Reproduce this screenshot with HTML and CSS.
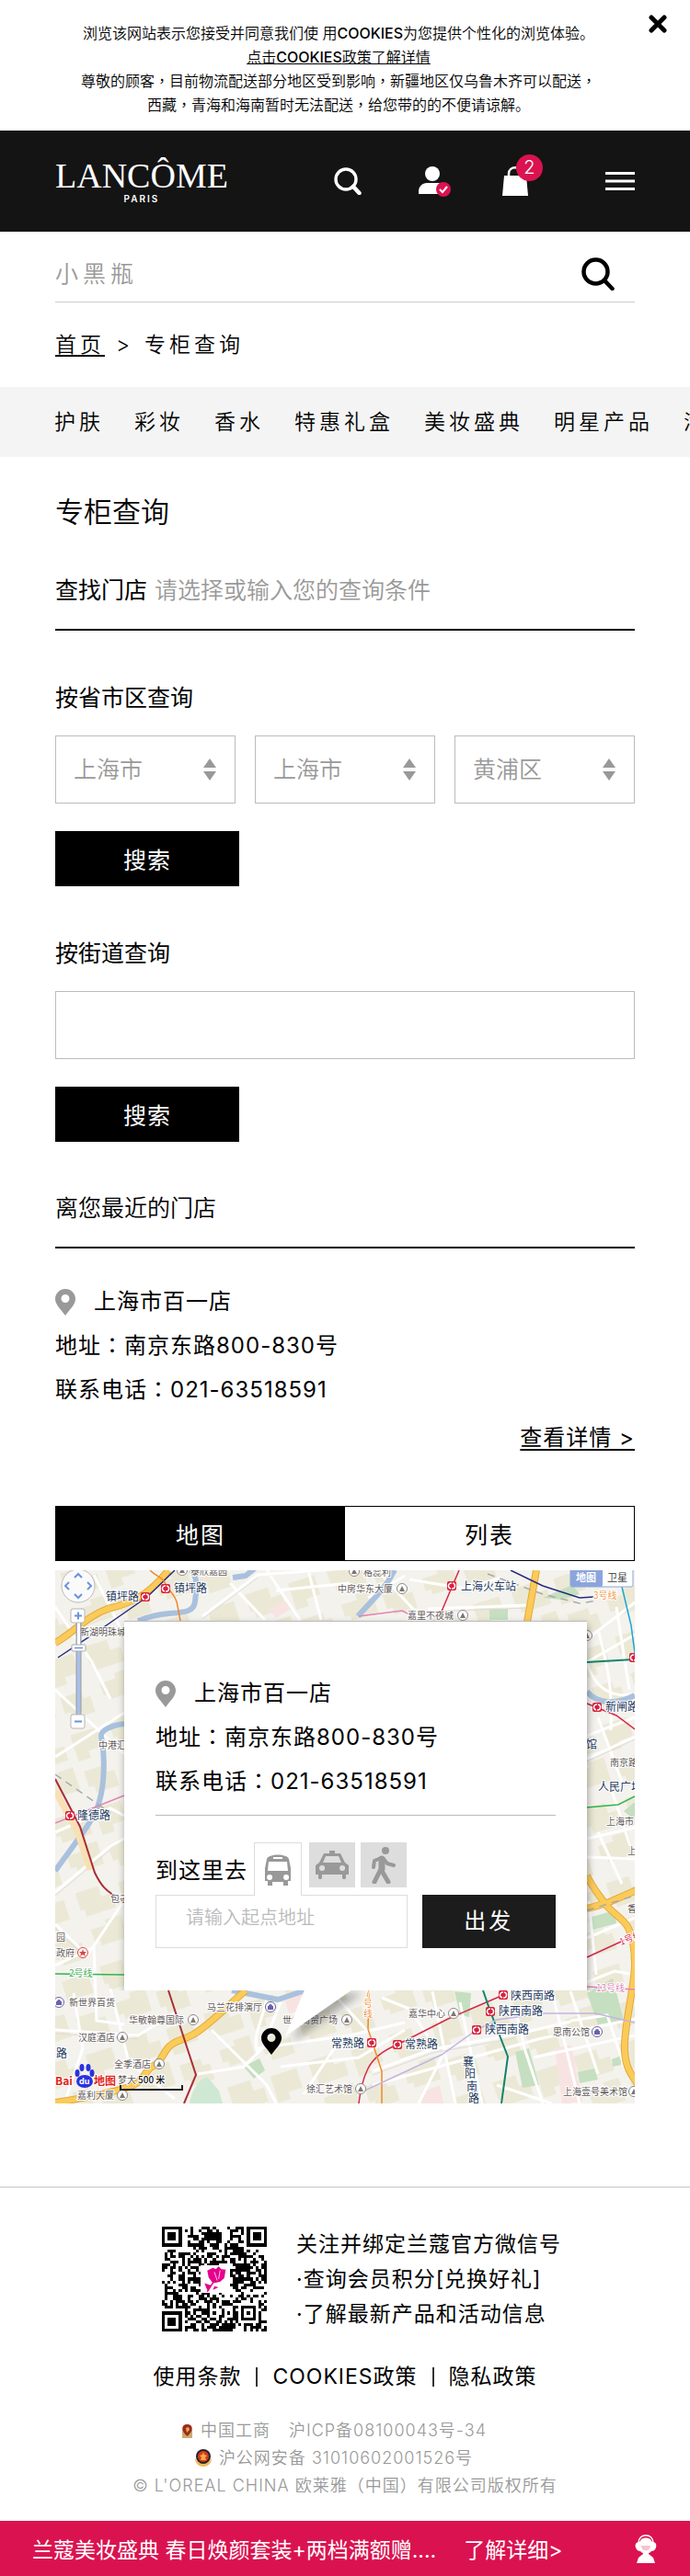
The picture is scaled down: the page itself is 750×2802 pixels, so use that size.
FILE: index.html
```html
<!DOCTYPE html>
<html lang="zh-CN">
<head>
<meta charset="utf-8">
<meta name="viewport" content="width=device-width, initial-scale=1">
<title>专柜查询</title>
<link rel="stylesheet" href="styles.css">
</head>
<body>
<section class="cookie">
  <p>浏览该网站表示您接受并同意我们使 用<b>COOKIES</b>为您提供个性化的浏览体验。<br><a href="#cookies">点击<b>COOKIES</b>政策了解详情</a><br>尊敬的顾客<span class="mid" lang="zh-Hant">，</span>目前物流配送部分地区受到影响<span class="mid" lang="zh-Hant">，</span>新疆地区仅乌鲁木齐可以配送<span class="mid" lang="zh-Hant">，</span><br>西藏<span class="mid" lang="zh-Hant">，</span>青海和海南暂时无法配送<span class="mid" lang="zh-Hant">，</span>给您带的的不便请谅解。</p>
  <button class="cookie-close" type="button" aria-label="关闭"><svg width="20" height="20" viewBox="0 0 20 20"><path d="M3 3l14 14M17 3L3 17" stroke="#000" stroke-width="5" stroke-linecap="round"/></svg></button>
</section>

<header class="header">
  <a class="logo" href="#home"><span class="logo-name">LANCÔME</span><span class="logo-city">PARIS</span></a>
  <div class="tools">
    <button class="tool" type="button" aria-label="搜索"><svg width="30" height="30" viewBox="0 0 30 30" fill="none" stroke="#fff"><circle cx="13" cy="13" r="11" stroke-width="3.4"/><path d="M21 21l6.500 7" stroke-width="4.500" stroke-linecap="round"/></svg></button>
    <button class="tool" type="button" aria-label="账户"><svg width="35" height="33" viewBox="0 0 35 33"><circle cx="15" cy="8" r="8" fill="#fff"/><path d="M0 30v-3c0-5 4-9 9-9h12c5 0 9 4 9 9v3z" fill="#fff"/><circle cx="27" cy="25" r="8" fill="#da1350"/><path d="M23 25l3 3 5-6" fill="none" stroke="#fff" stroke-width="2"/></svg></button>
    <button class="tool bag" type="button" aria-label="购物袋"><svg width="28" height="32" viewBox="0 0 28 32"><path d="M2 10h24l2 22H0z" fill="#fff"/><path d="M7 12V8c0-9 14-9 14 0v4" fill="none" stroke="#fff" stroke-width="2.500"/></svg><span class="badge">2</span></button>
    <button class="tool" type="button" aria-label="菜单"><svg width="32" height="20" viewBox="0 0 32 20"><path d="M0 1.500h32M0 10h32M0 18.500h32" stroke="#fff" stroke-width="3"/></svg></button>
  </div>
</header>

<form class="search">
  <input type="search" aria-label="搜索商品" placeholder="小黑瓶">
  <button type="button" aria-label="搜索"><svg width="36" height="36" viewBox="0 0 36 36" fill="none" stroke="#000"><circle cx="15.500" cy="15.500" r="13" stroke-width="4.500"/><path d="M25 25l8.500 9" stroke-width="4.500" stroke-linecap="round"/></svg></button>
</form>

<div class="crumbs"><a href="#home">首页</a><span>&gt;</span><span>专柜查询</span></div>

<nav class="nav">
  <a href="#n1">护肤</a><a href="#n2">彩妆</a><a href="#n3">香水</a><a href="#n4">特惠礼盒</a><a href="#n5">美妆盛典</a><a href="#n6">明星产品</a><a href="#n7">满额礼遇</a>
</nav>

<main class="main">
  <h1>专柜查询</h1>
  <div class="finder"><label for="find">查找门店</label><input id="find" type="text" placeholder="请选择或输入您的查询条件"></div>

  <form class="block">
    <h2>按省市区查询</h2>
    <div class="selects">
      <div class="select"><select aria-label="省"><option>上海市</option></select><svg width="14" height="24" viewBox="0 0 14 24"><path d="M7 0l7 10H0zM0 14h14L7 24z" fill="#999"/></svg></div>
      <div class="select"><select aria-label="市"><option>上海市</option></select><svg width="14" height="24" viewBox="0 0 14 24"><path d="M7 0l7 10H0zM0 14h14L7 24z" fill="#999"/></svg></div>
      <div class="select"><select aria-label="区"><option>黄浦区</option></select><svg width="14" height="24" viewBox="0 0 14 24"><path d="M7 0l7 10H0zM0 14h14L7 24z" fill="#999"/></svg></div>
    </div>
    <button class="submit" type="button">搜索</button>
  </form>

  <form class="block">
    <h2><label for="street">按街道查询</label></h2>
    <input class="street" id="street" type="text">
    <button class="submit" type="button">搜索</button>
  </form>

  <h2 class="nearest">离您最近的门店</h2>
  <div class="store">
    <p class="store-name"><svg class="pin" viewBox="0 0 22 29"><path fill-rule="evenodd" d="M11 0a11 11 0 0 1 11 11c0 6-6 11-11 18C6 22 0 17 0 11A11 11 0 0 1 11 0zm0 6a4.500 4.500 0 1 0 0 9 4.500 4.500 0 0 0 0-9z"/></svg>上海市百一店</p>
    <p>地址<span class="mid" lang="zh-Hant">：</span>南京东路800-830号</p>
    <p>联系电话<span class="mid" lang="zh-Hant">：</span>021-63518591</p>
  </div>
  <a class="details" href="#detail">查看详情 &gt;</a>

  <div class="tabs"><button class="tab tab-on" type="button">地图</button><button class="tab" type="button">列表</button></div>

  <div class="map">
    <svg class="map-art" viewBox="0 0 630 580" preserveAspectRatio="xMinYMin slice">
      <defs>
        <pattern id="blocks" width="92" height="84" patternUnits="userSpaceOnUse" patternTransform="rotate(-18)">
          <path d="M4 5h26v12h12v16H8v-8H4zM52 8h30v22H66v8H52zM8 48h18v-6h18v26H14v-6H8zM54 50h24v8h8v18H60v-8h-6z" fill="#ebe9d6"/>
        </pattern>
        <g id="metro"><rect x="-5" y="-5" width="10" height="10" rx="2" fill="#d8213f"/><path d="M0-3a3 3 0 0 0-1 6M0 3a3 3 0 0 0 1-6" fill="none" stroke="#fff" stroke-width="1.500"/></g>
        <g id="poi"><circle r="5.500" fill="#fff" stroke="#8f8787"/><path d="M0-3l3 6h-6z" fill="#7d7676"/></g>
        <g id="shop"><circle r="5.500" fill="#fff" stroke="#6a62a8"/><path d="M-3-1h6v4h-6zM-2-1a2 2 0 0 1 4 0" fill="#6a62a8"/></g>
      </defs>
      <rect width="630" height="580" fill="#f4f2ed"/>
      <rect width="630" height="580" fill="url(#blocks)"/>
      <g fill="#f8e3e3"><path d="M232 42l18-8 6 8-16 10zM543 520l18-4 12 62-22 2zM248 462l22-4 2 20-18 4zM398 568l20-8 4 20h-24z"/></g>
      <g fill="#c5dfc0"><path d="M578 460l28-16 12 46-28 4zM500 524l15-4 11 40-18 3zM205 540l17-9 6 13-12 9zM434 458l18 2-2 26-10-2zM472 42h20v12h-20zM580 378l28-8 2 14-28 8zM568 546l18-4 4 12-20 4zM605 532l10-4v10l-9 2zM618 262l12-10v20zM530 30l32-14 8 10-20 6z"/><path d="M146 580c2-14 12-30 20-28l12 14 4 14z" fill="#cfe8d4"/></g>
      <g fill="none" stroke="#fff" stroke-width="3">
        <path d="M0 40l40 60 20 40M42 5l30 60M0 203l75-48M0 130l75 70M0 285l60-26 15 8M0 350l60-50 15-8M0 385l35 34 40-60M0 430l42-20 3 80 30 4M0 500l90 6 40-24M160 50l60-45 110-8M190 14l38 40M230 0l36 54M240 22l80-8M275 0l14 54M350 0l50 54M340 30l40-24M385 10l60 10 40-12M405 42l110-4M578 75l52-40M578 100l52-30M590 64c10 40 16 60 14 110M610 40l14 90M578 100c8 30 30 40 52 34M578 180l52-20M590 160l26 70M578 205l52-24M578 292l52-12M590 285l26 56M578 312l52 2M605 240l20 60M578 400l52-22M580 360l8 80M578 448l30-12 22 4M60 455l20 80 50 40M20 460l10 60-20 60M155 548l50-8 20-20 20-50M170 500l40 40 20 20 10 20M220 525c-6-20 4-30 10-60M245 540l85-10 50-30M220 520l100-14 60-14M300 458l40 44M270 570l40-60M345 545l65-24 90-16 60-14M345 560l180-50 105-22M355 465l30 12 20 30M410 458l25 122M440 470l24 110M540 458l30 122M560 490l40-6 20 60M520 530l110-24M500 475l10 45 20 60M395 580l30-60M560 458l30 90M480 560l60 20"/>
      </g>
      <g fill="none" stroke="#dedbd6" stroke-width="1"><path d="M160 53l60-45M405 45l110-4M0 354l60-50M345 549l65-24 90-16M0 504l90 6M578 208l52-24M0 389l33 32"/></g>
      <g fill="none" stroke="#a9c1de" stroke-width="6" stroke-linejoin="round"><path d="M147 0c10 10 6 22 5 34s-14 12-28 13-24 4-34 8M193 8l14-2 10-8M369 0c-10 20-24 32-40 50M75 167c-16 2-26 8-25 14 4 20 4 50-2 70-4 20-30 50-48 76M578 132c10 12 30 16 52 4M192 457l50 10 30-10"/></g>
      <g fill="none" stroke="#e5a93b" stroke-width="8"><path d="M123 0C106 22 90 34 57 42 34 50 20 68 0 79M207 457c-14 12-42 40-57 48s-20 6-27 14-8 16-16 20-10 12-17 18-40 14-90 22M523 0l-10 56M578 332c6 14 14 22 19 30s22 18 26 27 7 20 7 40-10 60-11 86 8 34 14 44M578 368l22-6 32-14"/></g>
      <g fill="none" stroke="#fbcb59" stroke-width="6"><path d="M123 0C106 22 90 34 57 42 34 50 20 68 0 79M207 457c-14 12-42 40-57 48s-20 6-27 14-8 16-16 20-10 12-17 18-40 14-90 22M523 0l-10 56M578 332c6 14 14 22 19 30s22 18 26 27 7 20 7 40-10 60-11 86 8 34 14 44M578 368l22-6 32-14"/></g>
      <path d="M0 240l24 44 14 42" fill="none" stroke="#f9e0b4" stroke-width="7"/>
      <g fill="none" stroke-width="1.500">
        <path d="M130 0l-30 29-43 30L3 95M495 0l35 17 40 13 15-1" stroke="#262a80"/>
        <path d="M103 0c8 8 13 6 17 15s12 12 13 24l3 16" stroke="#f1872a"/>
        <path d="M0 227l13 25 14 27 16 50c6 12 10 20 32 31M123 457l30 92-13 31" stroke="#a82e36" stroke-width="2"/>
        <path d="M0 275l75-30M330 50l47-6 8 4M578 453l52 3" stroke="#e382b7"/>
        <path d="M0 439l75 1M578 258l34-3 18-9" stroke="#2fb64d"/>
        <path d="M439 0l-20 47M578 145l32 13 20 15M578 421l50-23M487 462l-60 26-55 28c-20 8-28 18-32 26s-8 20-10 38" stroke="#d52849"/>
        <path d="M616 18l10 42 4 30" stroke="#1ca6d1"/>
        <path d="M578 100l51-3M465 457l8 23 19 49-7 51" stroke="#138370" stroke-width="2"/>
        <path d="M341 457l-1 42 15 46v35" stroke="#f1872a"/>
        <path d="M330 569l90-42 38-27 22-11 50-7h57l43 10" stroke="#c3b4e0"/>
        <path d="M470 4l60 22 40 10 20-3M0 222l60 42M578 370l52-16" stroke="#aaa" stroke-dasharray="8 6"/>
      </g>
      <g class="poi-text">
        <text x="147" y="5">泰欣嘉园</text><text x="27" y="71">新湖明珠城</text><text x="47" y="194">中港汇</text><text x="307" y="24">中房华东大厦</text><text x="335" y="6">格蕊利</text><text x="383" y="53">嘉里不夜城</text><text x="603" y="213">南京路</text><text x="599" y="277">上海市</text><text x="622" y="309">上海</text><text x="622" y="372">香</text><text x="60" y="361">包子</text><text x="1" y="403">园</text><text x="1" y="420">政府</text><text x="15" y="474">新世界百货</text><text x="165" y="479">马兰花排演厅</text><text x="80" y="493">华敏翰尊国际</text><text x="247" y="493">世纪商贸广场</text><text x="25" y="512">汉庭酒店</text><text x="64" y="541">全季酒店</text><text x="68" y="558">梦大</text><text x="24" y="575">嘉利大厦</text><text x="273" y="568">徐汇艺术馆</text><text x="384" y="486">嘉华中心</text><text x="541" y="506">思南公馆</text><text x="552" y="571">上海壹号美术馆</text>
      </g>
      <g class="metro-text">
        <text x="55" y="33">镇坪路</text><text x="129" y="24">镇坪路</text><text x="441" y="22">上海火车站</text><text x="598" y="153">新闸路</text><text x="577" y="194">馆</text><text x="590" y="240">人民广场</text><text x="24" y="271">隆德路</text><text x="1" y="530">路</text><text x="300" y="519">常熟路</text><text x="380" y="520">常熟路</text><text x="495" y="467">陕西南路</text><text x="482" y="484">陕西南路</text><text x="467" y="504">陕西南路</text>
        <text><tspan x="443" y="539">襄</tspan><tspan x="445" y="552">阳</tspan><tspan x="447" y="566">南</tspan><tspan x="449" y="579">路</tspan></text>
      </g>
      <g class="line-text"><text x="15" y="442" fill="#2fa447">2号线</text><text x="585" y="31" fill="#f09035">3号线</text><text x="588" y="458" fill="#d779b0">13号线</text><text x="615" y="408" fill="#d52849" transform="rotate(-22 615 408)">1号线</text><text fill="#f1872a"><tspan x="337" y="464">7</tspan><tspan x="335" y="475">号</tspan><tspan x="335" y="486">线</tspan></text></g>
      <use href="#metro" x="98" y="29"/><use href="#metro" x="120" y="20"/><use href="#metro" x="431" y="17"/><use href="#metro" x="629" y="95"/><use href="#metro" x="589" y="149"/><use href="#metro" x="16" y="267"/><use href="#metro" x="344" y="514"/><use href="#metro" x="372" y="516"/><use href="#metro" x="487" y="462"/><use href="#metro" x="473" y="480"/><use href="#metro" x="458" y="500"/>
      <use href="#poi" x="138" y="0"/><use href="#poi" x="325" y="1"/><use href="#poi" x="377" y="20"/><use href="#poi" x="443" y="49"/><use href="#poi" x="578" y="71"/><use href="#poi" x="150" y="489"/><use href="#poi" x="317" y="489"/><use href="#poi" x="73" y="508"/><use href="#poi" x="113" y="537"/><use href="#poi" x="73" y="571"/><use href="#poi" x="332" y="564"/><use href="#poi" x="433" y="482"/><use href="#poi" x="629" y="567"/>
      <use href="#shop" x="4" y="470"/><use href="#shop" x="234" y="475"/><use href="#shop" x="589" y="502"/>
      <circle cx="30" cy="416" r="5.500" fill="#fff" stroke="#d84848"/><path d="M30 412l1 3h3l-2 2 1 3-3-2-3 2 1-3-2-2h3z" fill="#d84848"/>
      <g>
        <circle cx="25" cy="17" r="18" fill="#fafafa" stroke="#bcbcbc"/>
        <path d="M21 8l4-4 4 4M21 26l4 4 4-4M15 13l-4 4 4 4M35 13l4 4-4 4" fill="none" stroke="#6b93dc" stroke-width="2"/>
        <rect x="23" y="56" width="5" height="102" fill="#a9bfe9" stroke="#9b9b9b"/><rect x="24" y="57" width="3" height="26" fill="#fff"/>
        <rect x="17" y="42" width="15" height="15" rx="2" fill="#fff" stroke="#b5b5b5"/><path d="M21 49.500h8M25 45.500v8" stroke="#6b93dc" stroke-width="2"/>
        <rect x="18" y="81" width="15" height="7" rx="1" fill="#fff" stroke="#a9a9a9"/><path d="M21 84.500h9" stroke="#6b93dc" stroke-width="1.500"/>
        <rect x="17" y="157" width="15" height="15" rx="2" fill="#fff" stroke="#b5b5b5"/><path d="M21 164.500h8" stroke="#6b93dc" stroke-width="2"/>
        <rect x="560" y="-3" width="68" height="21" rx="2" fill="#fff" stroke="#8ba5dc"/><rect x="560" y="-3" width="35" height="21" rx="2" fill="#8ba5dc"/>
        <text class="type-text" x="566" y="12" fill="#fff" font-weight="700">地图</text><text class="type-text" x="600" y="12" fill="#333">卫星</text>
      </g>
      <g>
        <text class="baidu" x="0" y="560">Bai</text><text class="baidu" x="42" y="560">地图</text>
        <g fill="#2932e1"><ellipse cx="32" cy="556" rx="9" ry="7"/><ellipse cx="24" cy="547" rx="2.500" ry="4"/><ellipse cx="29" cy="541" rx="2.500" ry="4"/><ellipse cx="36" cy="541" rx="2.500" ry="4"/><ellipse cx="40" cy="547" rx="2.500" ry="4"/></g><text x="26" y="559" class="du">du</text>
        <text class="scale" x="90" y="558">500 米</text><path d="M71 560v5h67v-5" fill="none" stroke="#222" stroke-width="2"/>
      </g>
      <path class="tail" d="M272 454h54l-76 53z" fill="#fff"/>
      <path fill="#000" fill-rule="evenodd" transform="translate(224 498)" d="M11 0a11 11 0 0 1 11 11c0 6-6 11-11 18C6 22 0 17 0 11A11 11 0 0 1 11 0zm0 6a4.500 4.500 0 1 0 0 9 4.500 4.500 0 0 0 0-9z"/>
    </svg>
    <section class="popup">
      <p class="store-name"><svg class="pin" viewBox="0 0 22 29"><path fill-rule="evenodd" d="M11 0a11 11 0 0 1 11 11c0 6-6 11-11 18C6 22 0 17 0 11A11 11 0 0 1 11 0zm0 6a4.500 4.500 0 1 0 0 9 4.500 4.500 0 0 0 0-9z"/></svg>上海市百一店</p>
      <p>地址<span class="mid" lang="zh-Hant">：</span>南京东路800-830号</p>
      <p>联系电话<span class="mid" lang="zh-Hant">：</span>021-63518591</p>
      <div class="route">
        <label for="start">到这里去</label>
        <div class="modes">
          <button class="mode mode-on" type="button" aria-label="公交"><svg width="28" height="34" viewBox="0 0 28 34" fill="#999"><path fill-rule="evenodd" d="M2 5C4-1 24-1 26 5l2 10v14h-3v5h-5v-4H8v4H3v-5H0V15zM9 3v2h10V3zM4 8L3 18h22L24 8zM5 22a3 3 0 1 0 .1 6 3 3 0 0 0 0-6zM23 22a3 3 0 1 0 .1 6 3 3 0 0 0 0-6z"/></svg></button>
          <button class="mode" type="button" aria-label="驾车"><svg width="36" height="31" viewBox="0 0 36 31" fill="#999"><path fill-rule="evenodd" d="M15 0h6v3h6l5 10 4 3v10h-3v3c0 3-4 3-4 0v-3H7v3c0 3-4 3-4 0v-3H0V16l4-3L9 3h6zM11 6L8 13h20l-3-7zM7 16a3 3 0 1 0 .1 6 3 3 0 0 0 0-6zM29 16a3 3 0 1 0 .1 6 3 3 0 0 0 0-6z"/></svg></button>
          <button class="mode" type="button" aria-label="步行"><svg width="26" height="40" viewBox="0 0 26 40" fill="none" stroke="#999" stroke-linecap="round" stroke-linejoin="round"><circle cx="15" cy="4" r="4" fill="#999" stroke="none"/><path d="M11 13v11" stroke-width="7"/><path d="M10 12l-7 3-1 7M13 13l4 5 7 2" stroke-width="4"/><path d="M9 26l-6 12M11 26l7 12" stroke-width="5"/></svg></button>
        </div>
      </div>
      <div class="go"><input id="start" type="text" placeholder="请输入起点地址"><button type="button">出发</button></div>
    </section>
  </div>
</main>

<footer class="footer">
  <div class="wechat">
    <svg id="qr" class="qr" viewBox="0 0 37 37" shape-rendering="crispEdges" role="img" aria-label="微信二维码">
      <path id="qr-cells" fill="#000"/>
      <path d="M0 0h7v7H0zM30 0h7v7h-7zM0 30h7v7H0z" fill="#000"/><path d="M1 1h5v5H1zM31 1h5v5h-5zM1 31h5v5H1z" fill="#fff"/><path d="M2 2h3v3H2zM32 2h3v3h-3zM2 32h3v3H2zM28 28h5v5h-5z" fill="#000"/><path d="M29 29h3v3h-3z" fill="#fff"/><path d="M30 30h1v1h-1z"/>
      <rect x="13.500" y="13.500" width="10.500" height="10" fill="#fff"/>
      <g fill="#e5008c" shape-rendering="auto"><path d="M16 15.500l2-1 1 .5 1-1 1 1 1.500.2-.5 3-1.500 1.300-2.500.5-1.500-2zM15 20l2.500.8-1.500 1.700zM18.500 21l1.500.4-2 .9z"/><path d="M18.500 19l-2.500 4" stroke="#e5008c" stroke-width=".5"/><path d="M18.500 16l1 3M20.500 15.500l-.5 3" stroke="#fff" stroke-width=".25"/></g>
    </svg>
    <div class="wechat-text"><p>关注并绑定兰蔻官方微信号</p><p>·查询会员积分[兑换好礼]</p><p>·了解最新产品和活动信息</p></div>
  </div>
  <div class="policies"><a href="#terms">使用条款</a><i></i><a href="#cookies">COOKIES政策</a><i></i><a href="#privacy">隐私政策</a></div>
  <div class="legal">
    <p class="record"><svg width="13" height="15" viewBox="0 0 13 15"><path d="M1 6h11v9H1z" fill="#c9ac6d"/><path d="M6.500 0C13 0 14 7 6.500 13-1 7 0 0 6.500 0z" fill="#9e2b1d"/><path d="M5 4l3-1 1 3-3 3z" fill="#e6b04d"/></svg><span>中国工商</span><span class="icp">沪ICP备08100043号-34</span></p>
    <p class="record"><svg width="18" height="20" viewBox="0 0 18 20"><path d="M0 10c0 12 18 12 18 0l-4 5H4z" fill="#f2b956"/><circle cx="9" cy="8" r="8" fill="#292326"/><circle cx="9" cy="8" r="6" fill="#d73821"/><path d="M9 3l1 3 3 1-2 2 1 3H6l1-3-2-2 3-1z" fill="#f4ac3e"/></svg><span>沪公网安备 31010602001526号</span></p>
    <p>© L'OREAL CHINA 欧莱雅<span class="mid" lang="zh-Hant">（</span>中国<span class="mid" lang="zh-Hant">）</span>有限公司版权所有</p>
  </div>
</footer>

<div class="promo">
  <span>兰蔻美妆盛典 春日焕颜套装+两档满额赠....</span><a href="#more">了解详细&gt;</a>
  <button type="button" aria-label="在线客服"><svg width="26" height="31" viewBox="0 0 26 31" fill="#fff"><path d="M5 9c0-11 16-11 16 0" fill="none" stroke="#fff" stroke-width="1.500"/><path d="M8 5c3-2 7-2 10 0l2 3c4 0 5 3 4 6s-3 4-5 4c-1 1-2 2-3 2v1l5 4 2 6H3l2-6 5-4v-1c-1 0-2-1-3-2-2 0-4-1-5-4S2 8 6 8z"/><path d="M8 12h10c0 7-10 7-10 0z" fill="#f7c3d1"/></svg></button>
</div>
<script src="qr.js"></script>
</body>
</html>
```

FILE: styles.css
```css
* { box-sizing: border-box; }
body { margin: 0; color: #000; background: #fff; font-family: Inter, "Noto Sans CJK SC", sans-serif; font-size: 25px; font-weight: 350; }
p, h1, h2 { margin: 0; font-weight: inherit; }
a { color: inherit; text-decoration: none; }
button, input, select { font: inherit; color: inherit; border: 0; border-radius: 0; padding: 0; margin: 0; background: none; }
input { min-width: 0; }
svg { display: block; flex: none; }
.mid { font-family: "Noto Sans CJK TC", sans-serif; line-height: 0; }

.cookie { position: relative; padding: 23px 54px 15px 40px; text-align: center; font-size: 16px; line-height: 26px; }
.cookie b { font-weight: 500; }
.cookie a { text-decoration: underline; }
.cookie-close { position: absolute; top: 16px; right: 25px; }

.header { display: flex; align-items: center; justify-content: space-between; height: 110px; padding: 0 60px; background: #141414; color: #fff; }
.logo { display: flex; flex-direction: column; align-items: center; }
.logo-name { font: 38px/38px "Liberation Serif", serif; }
.logo-city { font-size: 10px; font-weight: 600; line-height: 12px; letter-spacing: 2px; }
.tools { display: flex; align-items: center; }
.tool { margin-left: 62px; }
.tool.bag { position: relative; margin: 0 22px 0 56px; }
.badge { position: absolute; top: -13px; right: -16px; width: 29px; height: 29px; border-radius: 50%; background: #da1350; font-size: 20px; line-height: 29px; }

.search { display: flex; align-items: center; margin: 0 60px; padding: 16px 22px 0 0; height: 77px; border-bottom: 1px solid #ccc; }
.search input { flex: 1; height: 58px; letter-spacing: 5px; outline: 0; }
.search input::placeholder, .finder input::placeholder { color: #999; opacity: 1; }
.crumbs { display: flex; gap: 12px; padding: 0 60px; font-size: 23px; line-height: 92px; letter-spacing: 4px; }
.crumbs a { text-decoration: underline; text-underline-offset: 3px; }
.nav { display: flex; gap: 33px; padding: 0 59px; overflow: hidden; background: #f4f4f4; font-size: 23px; line-height: 76px; letter-spacing: 4px; white-space: nowrap; }

.main { padding: 40px 60px 90px; }
.main h1 { font-size: 31px; line-height: 40px; }
.main h2 { font-size: 25px; line-height: 40px; font-weight: 400; }
.finder { display: flex; gap: 8px; margin-top: 45px; padding-bottom: 22px; border-bottom: 2px solid #000; line-height: 40px; }
.finder label { font-weight: 400; }
.finder input { flex: 1; height: 40px; }
.block { margin-top: 53px; }
.selects { display: grid; grid-template-columns: repeat(3, 1fr); gap: 21px; margin-top: 21px; }
.select { display: grid; align-items: center; height: 74px; border: 1px solid #bbb; color: #999; }
.select > * { grid-area: 1 / 1; }
.select select { width: 100%; height: 72px; padding-left: 19px; appearance: none; }
.select svg { justify-self: end; margin-right: 20px; pointer-events: none; }
.street { display: block; width: 100%; height: 74px; margin-top: 21px; padding: 0 20px; border: 1px solid #bbb; }
.submit { display: block; width: 200px; height: 60px; margin-top: 30px; background: #000; color: #fff; letter-spacing: 1px; font-weight: 400; }
.main .nearest { margin-top: 52px; padding-bottom: 22px; border-bottom: 2px solid #000; font-weight: 350; }
.store { margin-top: 34px; font-size: 24px; line-height: 48px; font-weight: 400; letter-spacing: 1px; }
.store-name { display: flex; align-items: center; gap: 20px; }
.pin { width: 22px; height: 29px; fill: #999; }
.details { display: block; width: max-content; margin: 8px 0 0 auto; font-size: 24px; line-height: 40px; letter-spacing: 1px; text-decoration: underline; text-underline-offset: 4px; font-weight: 400; }
.tabs { display: flex; margin-top: 54px; border: 1px solid #000; }
.tab { flex: 1; height: 58px; letter-spacing: 2px; font-weight: 400; }
.tab-on { background: #000; color: #fff; }

.map { position: relative; margin-top: 10px; }
.map-art { width: 100%; height: 580px; font-family: "Noto Sans CJK SC", sans-serif; }
.map-art text { paint-order: stroke; stroke: #fff; stroke-width: 2px; }
.poi-text { font-size: 10px; font-weight: 400; fill: #5f5858; }
.metro-text { font-size: 12px; font-weight: 400; fill: #23395d; }
.line-text { font-size: 10px; }
.map-art .type-text { font-size: 11px; stroke: none; }
.map-art .baidu { font-size: 12px; font-weight: 700; fill: #e1251b; }
.map-art .du { font: 700 9px Inter, sans-serif; fill: #fff; stroke: none; }
.scale { font-size: 10px; font-weight: 500; fill: #111; }
.tail { filter: drop-shadow(8px 6px 5px rgba(0, 0, 0, .3)); }
.popup { position: absolute; top: 55px; left: 75px; right: 52px; padding: 54px 34px 48px; background: #fff; border-top: 1px solid #bbb; font-size: 24px; line-height: 48px; font-weight: 400; letter-spacing: 1px; box-shadow: 1px 4px 8px rgba(0, 0, 0, .35); clip-path: inset(-12px -16px 0 -16px); }
.route { display: flex; gap: 7px; margin-top: 12px; padding-top: 29px; border-top: 1px solid #bbb; }
.route label { padding-top: 7px; }
.modes { display: flex; align-items: flex-start; gap: 6px; }
.mode { display: grid; place-items: center; width: 50px; height: 49px; background: #ddd; }
.mode-on { position: relative; width: 52px; height: 58px; margin: 0 2px -1px 0; background: #fff; border: 1px solid #ddd; border-bottom: 0; }
.go { display: grid; grid-template-columns: 273fr 145fr; gap: 16px; height: 56px; }
.go input { padding: 0 0 8px 32px; border: 1px solid #ddd; font-size: 20px; font-weight: 350; letter-spacing: 0; }
.go input::placeholder { color: #bbb; opacity: 1; }
.go button { background: #1c1c1c; color: #fff; font-size: 24px; letter-spacing: 3px; }

.footer { padding: 42px 20px 23px; border-top: 2px solid #ddd; text-align: center; letter-spacing: 1px; }
.wechat { display: flex; justify-content: center; align-items: center; gap: 32px; margin-left: 36px; }
.qr { width: 114px; height: 114px; }
.wechat-text { font-size: 23px; line-height: 38px; text-align: left; font-weight: 400; }
.policies { display: flex; justify-content: center; align-items: center; gap: 16px; margin-top: 29px; font-size: 23px; line-height: 40px; font-weight: 400; }
.policies i { width: 2px; height: 21px; background: #333; }
.legal { margin-top: 24px; color: #999; font-size: 18px; line-height: 30px; }
.legal p { display: flex; justify-content: center; align-items: center; gap: 8px; }
.legal p:last-child { display: block; }
.legal .record { padding-right: 24px; }
.icp { margin-left: 12px; }
.promo { display: flex; align-items: center; gap: 30px; height: 60px; padding: 0 35px; background: #da1350; color: #fff; font-size: 23px; font-weight: 400; white-space: nowrap; }
.promo button { margin-left: auto; }
```

FILE: qr.js
```js
// Fills the data area of the code, leaving the three finder squares and the logo clear.
(function () {
  var seed = 20177, size = 37, d = '';
  for (var y = 0; y < size; y++) {
    for (var x = 0; x < size; x++) {
      seed = (seed * 1103515245 + 12345) % 2147483648;
      var finder = (x < 8 && y < 8) || (x > 28 && y < 8) || (x < 8 && y > 28);
      var align = x > 26 && x < 34 && y > 26 && y < 34;
      if (!finder && !align && seed / 2147483648 > 0.48) d += 'M' + x + ' ' + y + 'h1v1h-1z';
    }
  }
  document.getElementById('qr-cells').setAttribute('d', d);
})();
```
